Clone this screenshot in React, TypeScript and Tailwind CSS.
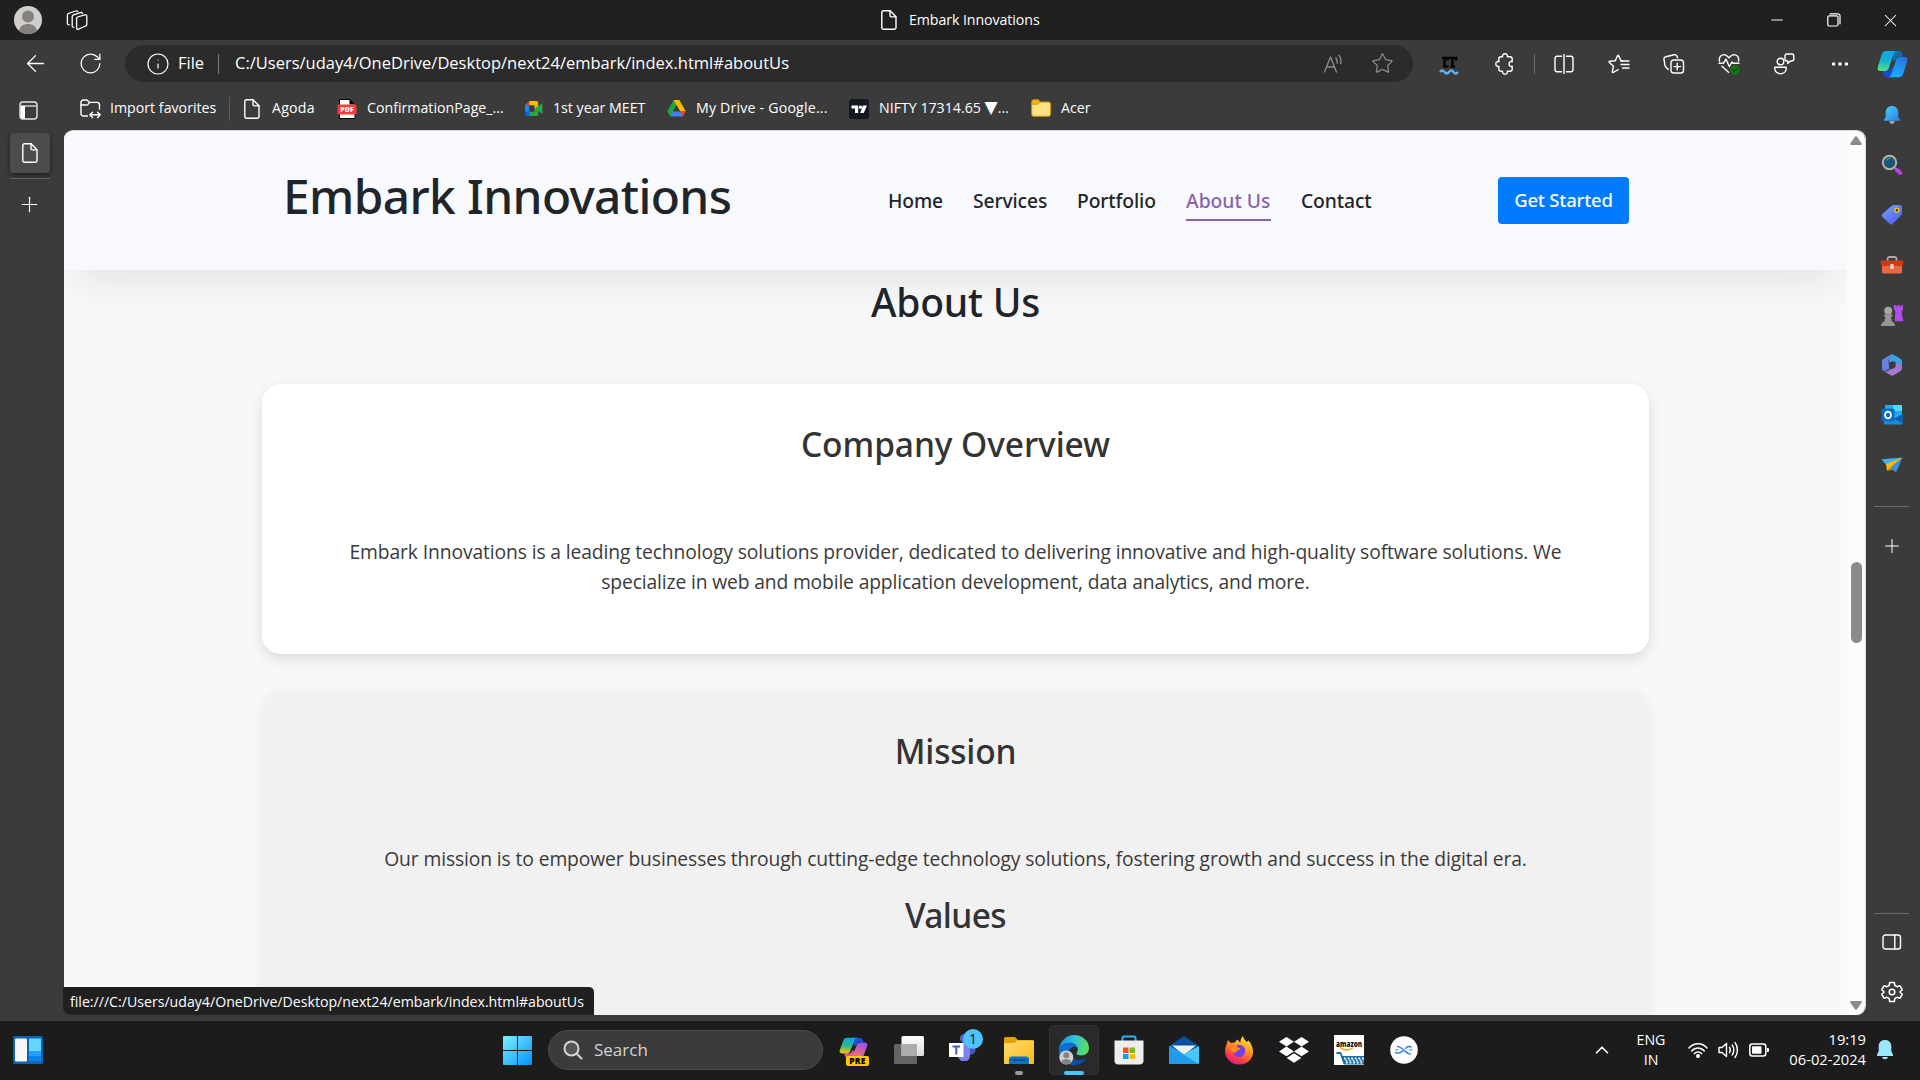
import type { ReactNode } from "react";
import { ArrowLeft, ChevronUp, Info, Minus, MoreHorizontal, Plus, RotateCw, Star, X } from "lucide-react";

type IconProps = { className?: string };

/* ---------- line icons ---------- */

const line = {
  fill: "none",
  stroke: "currentColor",
  strokeLinecap: "round" as const,
  strokeLinejoin: "round" as const,
};

function FileIcon({ className = "" }: IconProps) {
  return (
    <svg viewBox="0 0 16 20" className={`h-5 w-4 shrink-0 ${className}`} {...line} strokeWidth={1.4}>
      <path d="M2.5.8h6.6l5.9 6v10.6a1.8 1.8 0 0 1-1.8 1.8H2.5A1.7 1.7 0 0 1 .8 17.4V2.5A1.7 1.7 0 0 1 2.5.8Z" />
      <path d="M9 .9v4.6c0 .9.5 1.4 1.4 1.4h4.5" />
    </svg>
  );
}

function WorkspacesIcon() {
  return (
    <svg viewBox="0 0 22 20" className="h-5 w-[22px]" {...line} strokeWidth={1.3}>
      <path d="M11.5 7 18.8 4.9c1.2-.3 2 .2 2 1.3v8.300c0 .8-.4 1.300-1.200 1.500l-7 3.200c-1.300.4-2-.1-2-1.200V8.700c0-.9.200-1.400.9-1.700Z" />
      <path d="M7.800 17.200c-1 .1-1.600-.4-1.600-1.400V6.700c0-.9.300-1.500 1.200-1.800l7-2.300c.9-.3 1.600 0 2 .8" />
      <path d="M3.300 14.800c-1 .1-1.900-.4-1.900-1.500V5.100c0-.9.400-1.500 1.300-1.800l7-2.300c.9-.3 1.700 0 2 .6" />
    </svg>
  );
}

function TabsPaneIcon() {
  return (
    <svg viewBox="0 0 19 19" className="size-[19px]">
      <rect x="1" y="1" width="17" height="17" rx="3" fill="none" stroke="#e6e6e6" strokeWidth="1.4" />
      <path d="M1.500 5h16" stroke="#e6e6e6" strokeWidth="1.300" />
      <path d="M1.500 5h4.500v12.500H3.500a2 2 0 0 1-2-2Z" fill="#fff" />
    </svg>
  );
}

function ImportIcon() {
  return (
    <svg viewBox="0 0 21 20" className="h-5 w-[21px]" {...line} strokeWidth={1.4}>
      <path d="M7.500 17H3.300A2.300 2.300 0 0 1 1 14.700V3.300A2.300 2.300 0 0 1 3.300 1h2.900c.6 0 1 .2 1.400.6L9.500 3.400H17a2.500 2.500 0 0 1 2.500 2.500V10" />
      <path d="M1 6h5.600c.6 0 1-.2 1.400-.6l1.600-1.800" />
      <path d="M10 15.800h10M12.500 13.200 9.900 15.800l2.600 2.600M17.600 13.200l2.600 2.600-2.600 2.600" />
    </svg>
  );
}

function PuzzleIcon() {
  return (
    <svg viewBox="0 0 20 22" className="h-[22px] w-5" {...line} strokeWidth={1.4}>
      <path d="M6 3.700h1.700c-.5-1.700.6-3 2.300-3s2.800 1.300 2.300 3H15c1.300 0 2.200.9 2.200 2.200v2.800c-1.700-.5-3.200.5-3.200 2.300s1.500 2.800 3.200 2.300v2.800c0 1.300-.9 2.200-2.200 2.200h-2.700c.5 1.700-.6 3-2.300 3s-2.800-1.300-2.300-3H6c-1.300 0-2.200-.9-2.200-2.200v-2.800C2.100 13.800.8 12.700.8 11s1.300-2.800 3-2.300V5.900c0-1.300.9-2.200 2.200-2.200Z" />
    </svg>
  );
}

function ReadAloudIcon() {
  return (
    <svg viewBox="0 0 22 20" className="h-5 w-[22px] text-[#8d8d8d]" {...line} strokeWidth={1.3}>
      <path d="M1.500 18 7.500 3l6 15M3.600 13h7.800M12.800 3.800c1.300 1.500 1.700 3.300 1.400 5.200M15.800 1.200c2 2.500 2.600 5.400 2 8.500" />
    </svg>
  );
}

function LanguageToolIcon() {
  return (
    <svg viewBox="0 0 20 20" className="mt-1 size-5" fill="none">
      <path d="M5.500 1v9.500h4M3 2h4M8.500 4.500V2H17v2.500M13.500 2v8.500M11.500 10.500H16" stroke="#030303" strokeWidth="2.500" />
      <path d="M1 16c1.500-2 3-2 4.500 0s3 2 4.500 0 3-2 4.500 0 3 2 4.500 0" stroke="#5ab4f5" strokeWidth="2.300" />
    </svg>
  );
}

function SplitIcon() {
  return (
    <svg viewBox="0 0 20 20" className="size-5" {...line} strokeWidth={1.4}>
      <path d="M10 .5v19M7.500 2.200H3.200A2.200 2.200 0 0 0 1 4.400v11.200a2.200 2.200 0 0 0 2.200 2.200h4.300M12.500 2.200h4.300A2.200 2.200 0 0 1 19 4.400v11.200a2.200 2.200 0 0 1-2.200 2.200h-4.300" />
    </svg>
  );
}

function FavoritesIcon() {
  return (
    <svg viewBox="0 0 22 20" className="h-5 w-[22px]" {...line} strokeWidth={1.4}>
      <path d="M14.500 7 13 6.800 10.600 1.500c-.2-.5-.8-.5-1 0L7.300 6.700l-5.600.6c-.6.100-.8.700-.4 1.100l4.200 3.800-1.200 5.600c-.1.600.4 1 .9.700l5-2.900" />
      <path d="M13 10.500h8M13 7h8M14.500 14h6.500" />
    </svg>
  );
}

function CollectionsIcon() {
  return (
    <svg viewBox="0 0 22 20" className="h-5 w-[22px]" {...line} strokeWidth={1.400}>
      <rect x="8" y="6" width="12.500" height="13" rx="2.800" />
      <path d="M14.200 9.300v6.600M11 12.600h6.500M5.300 15.600 2.800 13c-.5-.5-.8-1.100-.9-1.800L1 5.300C.8 4 1.500 2.900 2.800 2.700l8.300-2c1.300-.3 2.400.4 2.900 1.500l.5 1.500" />
    </svg>
  );
}

function HealthIcon() {
  return (
    <svg viewBox="0 0 22 22" className="size-[22px]" {...line} strokeWidth={1.400}>
      <path d="M1.500 8.200C.7 4.700 2.500 1.700 5.700 1.600c2.200 0 3.800 1.300 5.300 3.300 1.500-2 3.100-3.300 5.300-3.300 3.200.1 5 3.100 4.200 6.600" />
      <path d="M1 10.200h4.500L8 6.200l3.300 7.300 2.700-4.600 1 1.300h6M4 13.300l6.500 6" />
      <circle cx="16.800" cy="17" r="4.700" fill="#0f7b0f" stroke="none" />
      <path d="m14.800 17 1.400 1.400 2.700-2.800" stroke="#0a3f0a" strokeWidth="1.100" />
    </svg>
  );
}

function ShareChatIcon() {
  return (
    <svg viewBox="0 0 22 22" className="size-[22px]" {...line} strokeWidth={1.400}>
      <circle cx="7.500" cy="8.500" r="3.300" />
      <path d="M1.800 14.200h11.400v1.300c0 3.200-2.500 5.200-5.700 5.200s-5.700-2-5.700-5.200ZM12 3a2 2 0 0 1 2-2h4.800a2 2 0 0 1 2 2v3a2 2 0 0 1-2 2h-1.300l-2.700 2.500V8H14a2 2 0 0 1-2-2Z" />
    </svg>
  );
}

function SidePaneIcon() {
  return (
    <svg viewBox="0 0 20 16" className="h-4 w-5" {...line} strokeWidth={1.400}>
      <rect x="1" y="1" width="17.500" height="14" rx="2.500" />
      <path d="M12.800 1v14" />
    </svg>
  );
}

function GearIcon() {
  return (
    <svg viewBox="0 0 22 22" className="size-[22px]" {...line} strokeWidth={1.500}>
      <circle cx="11" cy="11" r="2.800" />
      <path d="M8.700 1.500h4.600l.6 3 2.100 1.200 2.900-1 2.300 4L19 10.700v.6l2.200 2-2.300 4-2.900-1-2.100 1.200-.6 3H8.700l-.6-3L6 16.300l-2.900 1-2.300-4 2.200-2v-.6l-2.200-2 2.300-4 2.900 1 2.100-1.200Z" />
    </svg>
  );
}

/* ---------- coloured icons ---------- */

function CopilotIcon({ id, warm = false, className = "" }: IconProps & { id: string; warm?: boolean }) {
  return (
    <svg viewBox="0 0 32 32" preserveAspectRatio="none" className={className}>
      <defs>
        <linearGradient id={`${id}a`} x1=".3" y1="0" x2=".2" y2="1">
          <stop offset="0" stopColor="#0ea5e9" />
          <stop offset=".5" stopColor={warm ? "#2bb98a" : "#12b5c9"} />
          <stop offset="1" stopColor={warm ? "#ffc800" : "#5fe08a"} />
        </linearGradient>
        <linearGradient id={`${id}b`} x1=".8" y1="0" x2=".2" y2="1">
          <stop offset="0" stopColor={warm ? "#9b4df0" : "#2a6fe0"} />
          <stop offset="1" stopColor={warm ? "#ff7a5c" : "#15b8ff"} />
        </linearGradient>
      </defs>
      <path d="M15 1h7.500c2.200 0 3.300 1.800 3.800 4l.8 2.800h-5.600L17 14Z" fill={warm ? "#1c4fd8" : "#0a6fa8"} />
      <path d="M17 31H10c-2 0-3.100-1.600-3.600-3.600L5.500 24H12l4-6Z" fill={warm ? "#ef4fa0" : "#1b49d6"} />
      <path d="M8.800 1h12c-2 .2-3 1.500-3.700 3.700l-4.800 16c-.6 2.300-2 3.300-4.200 3.300H4c-3 0-4-2.200-3-5.500L5 4.500C5.700 2.200 6.800 1 8.800 1Z" fill={`url(#${id}a)`} />
      <path d="M23.200 31h-12c2-.2 3-1.500 3.700-3.700l4.800-16C20.300 9 21.700 8 23.900 8H28c3 0 4 2.200 3 5.500l-4 14c-.7 2.300-1.800 3.500-3.800 3.500Z" fill={`url(#${id}b)`} />
    </svg>
  );
}

function PdfIcon() {
  return (
    <svg viewBox="0 0 20 20" className="size-5">
      <path d="M2.500 .5h10.500l5 5v14h-15.500Z" fill="#fff" stroke="#000" strokeWidth="1" />
      <path d="M12.500 0 18 5.500h-5.500Z" fill="#000" />
      <rect x=".5" y="5.500" width="19" height="10" rx="1" fill="#fb3b3b" />
      <text x="10" y="13.200" textAnchor="middle" fontSize="7" fontWeight="800" fill="#fff" fontFamily="Open Sans, sans-serif">PDF</text>
    </svg>
  );
}

function MeetIcon() {
  return (
    <svg viewBox="0 0 20 18" className="h-[17px] w-[19px]">
      <path d="M5.500 1H13a2 2 0 0 1 2 2v4l-4 2V5.500H5.500Z" fill="#fbbc04" />
      <path d="M5.500 1v4.500H1Z" fill="#ea4335" />
      <path d="M1 5.500h4.500v7H1Z" fill="#2684fc" />
      <path d="M1 12.500h4.500V17H2.500A1.500 1.500 0 0 1 1 15.500Z" fill="#0066da" />
      <path d="M5.500 12.500H11V9l4-2 3.500-3c.5-.4 1-.1 1 .5v9c0 .6-.5.900-1 .5L15 11.500V15a2 2 0 0 1-2 2H5.500Z" fill="#25a844" />
    </svg>
  );
}

function DriveIcon() {
  return (
    <svg viewBox="0 0 20 18" className="h-[17px] w-[19px]">
      <path d="M7 0h6L3.300 17.500.3 12Z" fill="#1ea446" />
      <path d="M7 0h6l6.700 12h-6Z" fill="#ffba00" />
      <path d="M6.500 12h13.200l-3 5.500H3.300Z" fill="#3f83f5" />
      <path d="M13.700 12h6l-3 5.500Z" fill="#ea4335" />
      <path d="m10 5.500 3.700 6.500H6.500Z" fill="#3b3b3b" />
    </svg>
  );
}

function TradingViewIcon() {
  return (
    <svg viewBox="0 0 20 20" className="size-5">
      <rect width="20" height="20" rx="3.500" fill="#131722" />
      <path d="M2.500 6.500h6.700v7.500H6V9.500H2.500ZM14 6.500h4L14.700 14h-3.500Z" fill="#fff" />
      <circle cx="11.500" cy="8.200" r="1.700" fill="#fff" />
    </svg>
  );
}

function BookmarkFolderIcon() {
  return (
    <svg viewBox="0 0 20 18" className="h-[18px] w-5">
      <path d="M.7 3A2 2 0 0 1 2.700.8h4.500L9.500 3H17.500a2 2 0 0 1 2 2v10.300a2 2 0 0 1-2 2h-15a1.800 1.800 0 0 1-1.800-2Z" fill="#ffe083" stroke="#c99700" strokeWidth="1" />
      <path d="M.9 3a2 2 0 0 1 2-2h4.300l2 2-2.200 2.200H.9Z" fill="#f2b90c" stroke="#b98900" strokeWidth=".7" />
    </svg>
  );
}

function Bell({ className = "" }: IconProps) {
  return (
    <svg viewBox="0 0 20 22" className={className}>
      <defs>
        <linearGradient id="bell" x1="0" y1="0" x2="1" y2="1">
          <stop offset="0" stopColor="#46d0f5" />
          <stop offset="1" stopColor="#2a7de8" />
        </linearGradient>
      </defs>
      <path d="M7 18h6c-.3 1.800-1.400 2.700-3 2.700S7.300 19.800 7 18Z" fill="#b9b9b9" />
      <path d="M10 1c4.300 0 7 3 7 7v5.500l2 2.700c.3.600 0 1.300-.7 1.300H1.700c-.7 0-1-.7-.7-1.300l2-2.700V8c0-4 2.700-7 7-7Z" fill="url(#bell)" />
    </svg>
  );
}

function MagnifierIcon() {
  return (
    <svg viewBox="0 0 22 22" className="size-[22px]">
      <path d="m14 14 2.500 2" stroke="#999" strokeWidth="2" />
      <path d="m16 16 3.200 3" stroke="#c63df0" strokeWidth="4" strokeLinecap="round" />
      <circle cx="8.500" cy="8.500" r="6.700" fill="#1d5674" stroke="#b3b0ad" strokeWidth="2" />
      <path d="M5.500 6.500a4 4 0 0 1 4-2" stroke="#4a90b0" strokeWidth="1.200" fill="none" />
    </svg>
  );
}

function TagIcon() {
  return (
    <svg viewBox="0 0 22 22" className="size-[22px]">
      <defs>
        <linearGradient id="tag" x1="0" y1="0" x2=".8" y2="1">
          <stop offset="0" stopColor="#72a7fb" />
          <stop offset="1" stopColor="#4f5cf0" />
        </linearGradient>
      </defs>
      <path d="M13 1h5.500A2.500 2.500 0 0 1 21 3.500V9c0 1-.3 1.700-1 2.400L11.500 20c-.8.800-1.800.8-2.600 0L1.300 12.800c-.8-.8-.8-1.900 0-2.700L10.500 2c.8-.7 1.500-1 2.500-1Z" fill="url(#tag)" />
      <circle cx="15.800" cy="6.200" r="2" fill="#3b3320" stroke="#f3c613" strokeWidth="1.500" />
    </svg>
  );
}

function ToolboxIcon() {
  return (
    <svg viewBox="0 0 24 20" className="h-5 w-6">
      <path d="M7.500 6V4A2 2 0 0 1 9.500 2h5a2 2 0 0 1 2 2v2" fill="none" stroke="#a9a9a9" strokeWidth="1.800" />
      <path d="M2 10h20v7a1.500 1.500 0 0 1-1.500 1.500h-17A1.500 1.500 0 0 1 2 17Z" fill="#e8683f" />
      <rect x=".8" y="5.500" width="22.400" height="5.500" rx="1" fill="#cc3b12" />
      <rect x="10.300" y="9" width="3.500" height="5" rx="1.200" fill="#d6d6d6" />
    </svg>
  );
}

function ChessIcon() {
  return (
    <svg viewBox="0 0 24 24" className="size-6">
      <path d="M13.800 2h2v1.600h1.600V2h2.200v1.600h1.600V2H23v4.500l-1.300 1.800.8 7.200.8 1v1.700h-8.500l.5-9.700L13.800 6.500Z" fill="#b44bf0" />
      <circle cx="8.200" cy="7.800" r="4" fill="#a5a5a5" />
      <path d="M4 11.500h8.500v2H11l.7 4.700c2 .8 3.300 2.200 3.300 4.800H1c0-2.600 1.300-4 3.500-4.800l.8-4.700H4Z" fill="#979797" />
    </svg>
  );
}

function M365Icon() {
  return (
    <svg viewBox="0 0 22 22" className="size-[22px]">
      <path d="M9.500.8 3 4.500C1.700 5.300 1 6.300 1 8v6.500c0 1.500.8 2.500 2.300 2.500 1.500 0 5-2.200 5-2.200L7.500 7Z" fill="#6f7fe0" />
      <path d="M9.500.8c1-.5 2-.5 3 0L19 4.500c1.300.8 2 1.800 2 3.500v4L14.300 8C12 6.500 8.300 8 8.300 10.500v-5c0-2 .2-3.500 1.200-4.700Z" fill="#38a4e8" />
      <path d="M21 12v2c0 1.600-.7 2.700-2 3.400l-6.500 3.800c-1 .6-2 .6-3 0L3 17.300c2.500.4 4-.6 5.300-1.400L14.300 12.500V8l5 2.800c1 .5 1.700.7 1.700 1.200Z" fill="#a679d3" />
      <path d="M11.300 7.300 14.500 9v4l-3.300 2L8 13V9Z" fill="#3b3b3b" />
    </svg>
  );
}

function OutlookIcon() {
  return (
    <svg viewBox="0 0 22 22" className="size-[22px]">
      <path d="M4 2a1 1 0 0 1 1-1h15a1 1 0 0 1 1 1v12H4Z" fill="#28a8ea" />
      <path d="M12 1h8a1 1 0 0 1 1 1v5h-9Z" fill="#50d9ff" />
      <path d="M3 12l9 4 9.500-6v9.500a1 1 0 0 1-1 1H4a1 1 0 0 1-1-1Z" fill="#1490df" />
      <path d="M21.500 10v9.500L13 14.800Z" fill="#0f5fae" />
      <rect x=".5" y="4.500" width="13" height="13" rx="1.500" fill="#0a6cc8" />
      <ellipse cx="7" cy="11" rx="3" ry="3.400" fill="none" stroke="#fff" strokeWidth="1.800" />
    </svg>
  );
}

function PlaneIcon() {
  return (
    <svg viewBox="0 0 22 18" className="h-[18px] w-[22px]">
      <path d="M.5 3.200 21.500 1.500 5.500 9.500Z" fill="#3cb2f2" />
      <path d="M21.500 1.500 15 16.500 9 11.500Z" fill="#3f8be8" />
      <path d="M21.500 1.500 5 8l1 7 3.500-3.500Z" fill="#f5b70f" />
      <path d="m9.500 11.500 2.300 2L6 15Z" fill="#d98b06" />
    </svg>
  );
}

function WidgetsIcon() {
  return (
    <svg viewBox="0 0 30 28" className="h-7 w-[30px]">
      <rect width="30" height="28" rx="1.500" fill="#0b63b5" />
      <rect x="2" y="2.500" width="12" height="23" rx="1" fill="#f7f7f7" />
      <rect x="16" y="2.500" width="12" height="12.500" rx=".5" fill="#66d6ff" />
      <rect x="16" y="15" width="12" height="5" fill="#1fa2f7" />
      <rect x="16" y="20" width="12" height="5.500" fill="#0a84ea" />
    </svg>
  );
}

function StartIcon() {
  return (
    <svg viewBox="0 0 29 29" className="size-[29px]">
      <defs>
        <linearGradient id="start" gradientUnits="userSpaceOnUse" x1="0" y1="0" x2="29" y2="29">
          <stop offset="0" stopColor="#7df2ff" />
          <stop offset="1" stopColor="#0490fb" />
        </linearGradient>
      </defs>
      <path d="M1 0h13v14H0V1Q0 0 1 0ZM15 0h13q1 0 1 1v13H15ZM0 15h14v14H1q-1 0-1-1ZM15 15h14v13q0 1-1 1H15Z" fill="url(#start)" />
    </svg>
  );
}

function TaskViewIcon() {
  return (
    <svg viewBox="0 0 30 28" className="h-7 w-[30px]">
      <defs>
        <linearGradient id="tv" x1="0" y1="0" x2="0" y2="1">
          <stop offset="0" stopColor="#fff" />
          <stop offset="1" stopColor="#dcdcdc" />
        </linearGradient>
      </defs>
      <rect x="0" y="8" width="23" height="20" rx="1.500" fill="#646464" />
      <rect x="7.500" y="0" width="22.500" height="20" rx="1.500" fill="url(#tv)" />
      <path d="M7.500 8H23v12H7.500Z" fill="#acacac" />
    </svg>
  );
}

function TeamsIcon() {
  return (
    <svg viewBox="0 0 34 32" className="ml-[5px] h-8 w-[34px]">
      <path d="M19 12h7.500v10a5 5 0 0 1-7.500 3Z" fill="#4b53bc" />
      <circle cx="15.500" cy="9.500" r="4.500" fill="#5b63d0" />
      <path d="M9 14h12v12a6 6 0 0 1-12 1Z" fill="#7b83eb" />
      <rect x="0" y="14" width="14.500" height="14" fill="#fff" />
      <path d="M3.500 17.500h7.500M7.250 17.500v8" stroke="#4b53bc" strokeWidth="2" />
      <circle cx="24" cy="10" r="10" fill="#4cc2ff" />
      <text x="24" y="15" textAnchor="middle" fontSize="14" fill="#111" fontFamily="Open Sans, sans-serif">1</text>
    </svg>
  );
}

function ExplorerIcon() {
  return (
    <svg viewBox="0 0 30 28" className="h-7 w-[30px]">
      <defs>
        <linearGradient id="exp" x1="0" y1="0" x2="1" y2="1">
          <stop offset="0" stopColor="#ffdc6b" />
          <stop offset="1" stopColor="#f9bb1c" />
        </linearGradient>
      </defs>
      <path d="M0 2.500A1.500 1.500 0 0 1 1.500 1H11l3 3h14.500A1.500 1.500 0 0 1 30 5.500V10H0Z" fill="#e3a008" />
      <path d="M0 7h10.500L13 4.500h17v22.500a1 1 0 0 1-1 1H1a1 1 0 0 1-1-1Z" fill="url(#exp)" />
      <path d="M5 28v-4.500A3 3 0 0 1 8 20.500h14a3 3 0 0 1 3 3V28Z" fill="#0b72c4" />
      <path d="M8.500 24h13" stroke="#07498a" strokeWidth="1.500" />
    </svg>
  );
}

function EdgeIcon() {
  return (
    <svg viewBox="0 0 30 30" className="size-[30px]">
      <defs>
        <linearGradient id="edgeTop" x1="0" y1=".4" x2="1" y2=".6">
          <stop offset="0" stopColor="#1b8fe0" />
          <stop offset=".45" stopColor="#2fc3d6" />
          <stop offset="1" stopColor="#63e04f" />
        </linearGradient>
      </defs>
      <path d="M15 0c8.500 0 15 6 15 13 0 4.500-3.300 7.500-7.500 7.500-3.500 0-5-1.200-5-2.200s1.300-1.500 1.300-4C18.800 11.300 16 9 12 9 6 9 1 12.500.2 13.500 1 6 7.500 0 15 0Z" fill="url(#edgeTop)" />
      <path d="M0 15C.5 11 5 7.500 11 7.500c4.500 0 7.500 2.800 7.700 6.200C17.500 12 16 11.500 14 12c-3.500 1-5 4-4.500 7.500.8 5 5 9 9.500 9.500-10 3.500-19.500-4-19-14Z" fill="#0f6fd1" />
      <path d="M12 13c-2 3-1.500 7 2 9.800 4 3 9.500 2.700 13.500 0-2 4.200-7 7.200-12 7.200-5-1-8-5-7.500-10 .3-3 1.500-5.500 4-7Z" fill="#0c4c9c" />
      <circle cx="7.300" cy="22.500" r="7" fill="#d0cfcd" />
      <circle cx="7.300" cy="20.300" r="3" fill="#85827e" />
      <path d="M2.300 27.300c.7-2.300 2.500-3.300 5-3.300s4.300 1 5 3.300a7 7 0 0 1-10 0Z" fill="#85827e" />
    </svg>
  );
}

function StoreIcon() {
  return (
    <svg viewBox="0 0 30 30" className="size-[30px]">
      <path d="M8.500 7V3A1.500 1.500 0 0 1 10 1.500h10A1.500 1.500 0 0 1 21.500 3v4" fill="none" stroke="#2cb4ef" strokeWidth="2" />
      <path d="M.5 5.500h29v20a4 4 0 0 1-4 4h-21a4 4 0 0 1-4-4Z" fill="#ededed" />
      <path d="M9 12.500h5.500V18H9Z" fill="#f25022" />
      <path d="M15.500 12.500H21V18h-5.500Z" fill="#7fba00" />
      <path d="M9 19h5.500v5H9Z" fill="#00a4ef" />
      <path d="M15.500 19H21v5h-5.500Z" fill="#ffb900" />
    </svg>
  );
}

function MailIcon() {
  return (
    <svg viewBox="0 0 30 28" className="h-7 w-[30px]">
      <path d="M0 10 15 0l15 10-5 6H5Z" fill="#0c4f9e" />
      <path d="M3 9.500h24L15 19Z" fill="#f1f1f1" />
      <path d="M0 10l15 8 15-8v17a1 1 0 0 1-1 1H1a1 1 0 0 1-1-1Z" fill="#45c8f7" />
      <path d="M0 10l30 18H1a1 1 0 0 1-1-1Z" fill="#1e9be9" />
    </svg>
  );
}

function FirefoxIcon() {
  return (
    <svg viewBox="0 0 30 30" className="size-[30px]">
      <defs>
        <linearGradient id="fx" x1=".8" y1="0" x2=".3" y2="1">
          <stop offset="0" stopColor="#fff04a" />
          <stop offset=".4" stopColor="#ff9a1f" />
          <stop offset=".75" stopColor="#ff4343" />
          <stop offset="1" stopColor="#e31587" />
        </linearGradient>
      </defs>
      <path d="M19 1c.5 3 2.500 4.500 3.500 6l2-1.500c3 3.500 5 8 4.500 12.500C28.300 25 22.500 29.500 15 29.500 7 29.500 1 23.500 1 16c0-4 1.500-6.500 2-7.500l.8-3.500 3 3c1.200-.5 2.700-.7 4-.5C12 5.500 12.500 5 14 4.500c.5 2 1.500 2.500 2.500 3C16 5 17.500 2.500 19 1Z" fill="url(#fx)" />
      <circle cx="15" cy="16" r="6.200" fill="#7440e8" />
      <path d="M6 9c3-1 6 0 7 1.500-1 2 1 2.200 3.500 2.500-.5 2-3 2-3.700 3.300C12 18 9 18 8 16c-1.500-1-2.500-4-2-7Z" fill="#ff8a1f" />
    </svg>
  );
}

function DropboxIcon() {
  return (
    <svg viewBox="0 0 30 26" className="h-[26px] w-[30px]" fill="#fff">
      <path d="m7.500 0 7.500 4.800-7.500 4.800L0 4.800ZM22.500 0 30 4.800l-7.500 4.800L15 4.800ZM7.500 9.600l7.500 4.800-7.500 4.800L0 14.400ZM22.500 9.600l7.500 4.800-7.500 4.800-7.500-4.800ZM15 16.300l7.300 4.700-7.300 4.700L7.700 21Z" />
    </svg>
  );
}

function AmazonIcon() {
  return (
    <svg viewBox="0 0 30 30" className="size-[30px]">
      <rect width="30" height="30" fill="#fff" />
      <text x="15" y="11.500" textAnchor="middle" fontSize="8" fontWeight="800" textLength="26" lengthAdjust="spacingAndGlyphs" fill="#111" fontFamily="Open Sans, sans-serif">amazon</text>
      <path d="M6 12.500c4 3 9 3 13 .3" stroke="#f90" strokeWidth="1.300" fill="none" />
      <path d="M2.500 18h4l4 11" stroke="#1a6fa6" strokeWidth="1.800" fill="none" />
      <path d="M8 21h22v8.500H10.500Z" fill="#1a6fa6" />
      <path d="M10 23.500h20M12 27.500h18" stroke="#fff" strokeWidth="1.800" strokeDasharray="1.800 1.800" />
      <path d="M11.500 25.500h18.500" stroke="#fff" strokeWidth="1.400" strokeDasharray="1.400 2.200" />
    </svg>
  );
}

function WaveAppIcon() {
  return (
    <svg viewBox="0 0 28 28" className="size-7">
      <circle cx="14" cy="14" r="13.800" fill="#fff" />
      <path d="M7.500 10.500c2.500 0 4 1.500 6.500 3.800s4 3.700 6.500 3.700M5.500 16.500c3 1.200 5.300.3 7-1.300M15.500 12.500c1.800-1.800 3.800-2.800 5.500-1.500" stroke="#4285f4" strokeWidth="1.600" fill="none" strokeLinecap="round" />
      <path d="M19.500 13.800h2.500M6 13.800h2" stroke="#7aa8f8" strokeWidth="1.500" strokeLinecap="round" />
    </svg>
  );
}

function WifiIcon() {
  return (
    <svg viewBox="0 0 20 16" className="h-4 w-5" {...line} strokeWidth={1.500}>
      <path d="M1 6c5-5.600 13-5.600 18 0M3.700 8.900c3.600-4 9-4 12.600 0M6.400 11.600c2.100-2.300 5.100-2.300 7.200 0" />
      <circle cx="10" cy="14" r="1.300" fill="currentColor" />
    </svg>
  );
}

function SoundIcon() {
  return (
    <svg viewBox="0 0 21 18" className="h-[18px] w-[21px]" {...line} strokeWidth={1.400}>
      <path d="M1 6.500h3l4.500-4v13l-4.500-4H1ZM11.500 6.300c1 1.600 1 3.800 0 5.400M14.200 4c2 3 2 7 0 10M17 1.500c3.200 4.400 3.200 10.600 0 15" />
    </svg>
  );
}

function BatteryIcon() {
  return (
    <svg viewBox="0 0 20 14" className="h-3.5 w-5">
      <rect x=".8" y="1" width="16" height="12" rx="2.500" fill="none" stroke="#fff" strokeWidth="1.500" />
      <rect x="3" y="3.200" width="9.500" height="7.600" rx=".8" fill="#fff" />
      <path d="M18 5h1a1 1 0 0 1 1 1v2a1 1 0 0 1-1 1h-1Z" fill="#fff" />
    </svg>
  );
}

/* ---------- browser chrome ---------- */

function Cell({ className, children }: { className: string; children: ReactNode }) {
  return <div className={`flex shrink-0 items-center justify-center ${className}`}>{children}</div>;
}

function TitleBar() {
  return (
    <header className="flex h-10 items-center bg-[#202020]">
      <div className="flex w-[881px] items-center gap-6 pl-[14px]">
        <svg viewBox="0 0 28 28" className="size-7">
          <circle cx="14" cy="14" r="14" fill="#d0cfcd" />
          <circle cx="14" cy="10.500" r="6" fill="#85827e" />
          <path d="M5 24.700c1-4.600 4.500-6.700 9-6.700s8 2.100 9 6.700A14 14 0 0 1 5 24.700Z" fill="#85827e" />
        </svg>
        <WorkspacesIcon />
      </div>
      <FileIcon />
      <span className="ml-3 text-[14.2px] tracking-[-0.08px]">Embark Innovations</span>
      <div className="ml-auto flex pr-px">
        <Cell className="w-[57px]"><Minus size={18} strokeWidth={1.3} /></Cell>
        <Cell className="w-[57px]">
          <svg viewBox="0 0 14 14" className="size-3.5" {...line} strokeWidth={1.200}>
            <rect x=".8" y="2.800" width="10.200" height="10.200" rx="1.500" />
            <path d="M3 .8h8a2 2 0 0 1 2 2v8" />
          </svg>
        </Cell>
        <Cell className="w-[57px]"><X size={21} strokeWidth={1.2} /></Cell>
      </div>
    </header>
  );
}

function AddressRow() {
  return (
    <div className="flex h-[47px] items-center">
      <Cell className="w-[70px]"><ArrowLeft size={27} strokeWidth={1.2} /></Cell>
      <Cell className="w-[40px]"><RotateCw size={25} strokeWidth={1.2} /></Cell>
      <div className="ml-[15px] flex h-[37px] w-[1288px] items-center rounded-full bg-[#2b2b2b] pl-[21px] text-[16.5px]">
        <Info size={24} strokeWidth={1.2} />
        <span className="ml-2 w-[40px]">File</span>
        <span className="h-5 w-px bg-[#7a7a7a]" />
        <span className="ml-[16px]">C:/Users/uday4/OneDrive/Desktop/next24/embark/index.html#aboutUs</span>
        <div className="ml-auto flex pr-[6px]">
          <Cell className="w-[49px]"><ReadAloudIcon /></Cell>
          <Cell className="w-[49px]"><Star size={23} strokeWidth={1.3} className="text-[#8d8d8d]" /></Cell>
        </div>
      </div>
      <Cell className="ml-2 w-14"><LanguageToolIcon /></Cell>
      <Cell className="w-14"><PuzzleIcon /></Cell>
      <span className="ml-px h-5 w-px bg-[#6a6a6a]" />
      <Cell className="ml-px w-[55px]"><SplitIcon /></Cell>
      <Cell className="w-[55px]"><FavoritesIcon /></Cell>
      <Cell className="w-[55px]"><CollectionsIcon /></Cell>
      <Cell className="w-[55px]"><HealthIcon /></Cell>
      <Cell className="w-[55px]"><ShareChatIcon /></Cell>
      <Cell className="ml-px w-[55px]"><MoreHorizontal size={22} strokeWidth={2} /></Cell>
      <Cell className="w-[51px]"><CopilotIcon id="cpTop" className="h-[28px] w-[31px]" /></Cell>
    </div>
  );
}

function Bookmark({ icon, label, className }: { icon: ReactNode; label: ReactNode; className: string }) {
  return (
    <div className={`flex shrink-0 items-center whitespace-nowrap ${className}`}>
      <span className="mr-[10px] flex w-5 shrink-0 justify-center">{icon}</span>
      <span className="-mt-[2px]">{label}</span>
    </div>
  );
}

function BookmarksRow() {
  return (
    <div className="flex h-[43px] items-center text-[14.2px]">
      <Cell className="mt-1 w-[57px]"><TabsPaneIcon /></Cell>
      <div className="ml-[23px] flex w-[149px] items-center gap-[9px]">
        <ImportIcon />
        <span className="-mt-[2px]">Import favorites</span>
      </div>
      <span className="h-6 w-px bg-[#5c5c5c]" />
      <Bookmark className="ml-[12px] w-[95px] tracking-[0.2px]" icon={<FileIcon />} label="Agoda" />
      <Bookmark className="w-[186px]" icon={<PdfIcon />} label="ConfirmationPage_..." />
      <Bookmark className="w-[143px]" icon={<MeetIcon />} label="1st year MEET" />
      <Bookmark className="w-[183px] tracking-[0.18px]" icon={<DriveIcon />} label="My Drive - Google..." />
      <Bookmark
        className="w-[182px]"
        icon={<TradingViewIcon />}
        label={<>NIFTY 17314.65 <span className="font-['DejaVu_Sans'] text-[17px] leading-none">▼</span>...</>}
      />
      <Bookmark className="w-[80px]" icon={<BookmarkFolderIcon />} label="Acer" />
    </div>
  );
}

function VerticalTabs() {
  return (
    <aside className="flex w-16 flex-col pt-[3px] pl-[10px]">
      <div className="flex h-10 w-10 items-center justify-center rounded bg-[#4c4c4c] shadow-[0_2px_5px_rgba(0,0,0,0.5)]">
        <FileIcon />
      </div>
      <span className="mt-[5px] h-px w-10 bg-[#5f5f5f]" />
      <Cell className="mt-[13px] w-[38px]"><Plus size={25} strokeWidth={1.1} /></Cell>
    </aside>
  );
}

function SideBar() {
  return (
    <aside className="flex w-[53px] flex-col items-center pr-[2px]">
      <div className="-mt-10 flex flex-col items-center">
        <Cell className="h-[50px]"><Bell className="h-5 w-[18px]" /></Cell>
        <Cell className="h-[50px]"><MagnifierIcon /></Cell>
        <Cell className="h-[50px]"><TagIcon /></Cell>
        <Cell className="h-[50px]"><ToolboxIcon /></Cell>
        <Cell className="h-[50px]"><ChessIcon /></Cell>
        <Cell className="h-[50px]"><M365Icon /></Cell>
        <Cell className="h-[50px]"><OutlookIcon /></Cell>
        <Cell className="h-[50px]"><PlaneIcon /></Cell>
      </div>
      <span className="mt-[16px] h-px w-[35px] bg-[#6a6a6a]" />
      <Cell className="mt-[28px]"><Plus size={22} strokeWidth={1.1} /></Cell>
      <span className="mt-auto h-px w-[35px] bg-[#6a6a6a]" />
      <Cell className="h-[55px]"><SidePaneIcon /></Cell>
      <Cell className="mb-[5px] h-[46px]"><GearIcon /></Cell>
    </aside>
  );
}

/* ---------- web page ---------- */

function Navbar() {
  return (
    <nav className="relative z-10 flex h-[139px] shrink-0 items-center bg-[#f8f9fc] pl-[219px] font-['Noto_Sans',sans-serif] font-medium text-[#212529] shadow-[0_22px_40px_-14px_rgba(20,40,50,0.11)]">
      <span className="-mt-[10px] w-[605px] text-[47.8px] leading-[60px] tracking-[-0.62px] whitespace-nowrap">Embark Innovations</span>
      <ul className="mt-px flex h-10 gap-[30px] text-[19.3px] leading-[39px] tracking-[-0.12px] whitespace-nowrap">
        <li className="w-[55px]">Home</li>
        <li className="w-[74px]">Services</li>
        <li className="w-[79px]">Portfolio</li>
        <li className="w-[85px] border-b-2 border-[#8763ad] tracking-[0px] text-[#8763ad]">About Us</li>
        <li className="w-[70px]">Contact</li>
      </ul>
      <button className="-mt-px ml-[127px] h-[47px] w-[131px] rounded bg-[#007bff] text-center text-[18.5px] leading-[46px] tracking-[-0.2px] whitespace-nowrap text-[#f8f9fa]">
        Get Started
      </button>
    </nav>
  );
}

function WebPage() {
  return (
    <div className="flex min-w-0 flex-1 flex-col overflow-hidden bg-[#f8f8f8]">
      <Navbar />
      <section className="flex flex-col items-center text-center text-[19.3px] leading-[30px] tracking-[-0.12px] text-[#3a3a3a]">
        <h2 className="mt-2 font-['Noto_Sans',sans-serif] text-[39px] leading-[48px] font-medium tracking-[-0.2px] text-[#212529]">About Us</h2>
        <div className="mt-[58px] h-[270px] w-[1387px] rounded-[19px] bg-white px-[60px] pt-[39px] shadow-[0_5px_14px_rgba(0,0,0,0.12)]">
          <h3 className="font-['Noto_Sans',sans-serif] text-[33.5px] leading-[42px] font-medium tracking-[-0.08px] text-[#333]">Company Overview</h3>
          <p className="mt-[72px] whitespace-nowrap">
            Embark Innovations is a leading technology solutions provider, dedicated to delivering innovative and high-quality software solutions. We
            <br />
            <span className="tracking-[-0.15px]">specialize in web and mobile application development, data analytics, and more.</span>
          </p>
        </div>
        <div className="mt-[37px] h-[500px] w-[1387px] rounded-[19px] bg-[#f1f1f1] pt-[40px] shadow-[0_4px_12px_rgba(0,0,0,0.07)]">
          <h3 className="-mt-px font-['Noto_Sans',sans-serif] text-[33.5px] leading-[42px] font-medium tracking-[-0.2px] text-[#333]">Mission</h3>
          <p className="mt-[72px] whitespace-nowrap">
            Our mission is to empower businesses through cutting-edge technology solutions, fostering growth and success in the digital era.
          </p>
          <h3 className="mt-[20px] font-['Noto_Sans',sans-serif] text-[33.5px] leading-[42px] font-medium tracking-[-0.6px] text-[#333]">Values</h3>
        </div>
      </section>
    </div>
  );
}

function Scrollbar() {
  return (
    <div className="flex w-[18px] shrink-0 flex-col items-center bg-[#fcfcfc] pt-[5px] pb-[5px]">
      <svg viewBox="0 0 12 9" className="h-[9px] w-3 shrink-0" fill="#8b8b8b">
        <path d="M5 .8q1-1.200 2 0l4.700 6.700q.5 1.500-.8 1.500H1.100Q-.2 9 .3 7.500Z" />
      </svg>
      <span className="mt-[417px] h-[81px] w-[11px] shrink-0 rounded-full bg-[#8b8b8b]" />
      <svg viewBox="0 0 12 9" className="mt-auto h-[9px] w-3 shrink-0" fill="#8b8b8b">
        <path d="M5 8.200q1 1.200 2 0l4.700-6.700Q12.200 0 10.900 0H1.100Q-.2 0 .3 1.500Z" />
      </svg>
    </div>
  );
}

/* ---------- taskbar ---------- */

function Taskbar() {
  return (
    <footer className="flex h-[60px] items-center border-t border-[#424242] bg-[#1c1c1c] pb-px">
      <div className="w-[503px] pl-[13px]"><WidgetsIcon /></div>
      <StartIcon />
      <div className="ml-4 flex h-10 w-[275px] items-center rounded-full border border-[#4a4a4a] bg-[#3b3b3b] pl-[14px] text-[17px] text-[#d4d4d4]">
        <svg viewBox="0 0 20 20" className="size-5" {...line} strokeWidth={2}>
          <circle cx="8.500" cy="8.500" r="7" fill="#555" />
          <path d="m13.800 13.800 4.700 4.700" />
        </svg>
        <span className="ml-[11px] -mt-px">Search</span>
      </div>
      <div className="ml-[3px] flex items-center">
        <Cell className="relative h-[50px] w-[55px]">
          <CopilotIcon id="cpTask" warm className="mb-1 h-[22px] w-[29px]" />
          <span className="absolute bottom-[9px] left-[20px] flex h-[10px] w-[23px] items-center justify-center rounded-[2px] bg-[#ffc800] text-[8.500px] leading-none font-extrabold tracking-[0.3px] text-black">PRE</span>
        </Cell>
        <Cell className="w-[55px]"><TaskViewIcon /></Cell>
        <Cell className="w-[55px] pb-[10px]"><TeamsIcon /></Cell>
        <Cell className="relative h-[50px] w-[55px]">
          <ExplorerIcon />
          <span className="absolute bottom-0 h-1 w-2 rounded-full bg-[#9a9a9a]" />
        </Cell>
        <Cell className="w-[55px]">
          <div className="relative flex size-[50px] items-center justify-center rounded-[5px] border border-[#343434] bg-[#2a2a2a]">
            <EdgeIcon />
            <span className="absolute -bottom-px h-1 w-5 rounded-full bg-[#4cc2ff]" />
          </div>
        </Cell>
        <Cell className="w-[55px]"><StoreIcon /></Cell>
        <Cell className="w-[55px]"><MailIcon /></Cell>
        <Cell className="w-[55px]"><FirefoxIcon /></Cell>
        <Cell className="w-[55px]"><DropboxIcon /></Cell>
        <Cell className="w-[55px]"><AmazonIcon /></Cell>
        <Cell className="w-[55px]"><WaveAppIcon /></Cell>
      </div>
      <div className="ml-auto flex items-center">
        <ChevronUp size={22} strokeWidth={1.8} />
        <div className="ml-[23px] w-[30px] text-center text-[14.2px] leading-5">ENG<br />IN</div>
        <div className="ml-[22px] flex items-center gap-[10px]">
          <WifiIcon />
          <SoundIcon />
          <BatteryIcon />
        </div>
        <div className="-mt-[2px] ml-[10px] w-[87px] text-right text-[14.7px] leading-5">19:19<br />06-02-2024</div>
        <svg viewBox="0 0 16 20" className="mr-[27px] ml-[11px] h-5 w-4" fill="#99e7ff">
          <path d="M8 0c4 0 6.300 2.700 6.300 6v5L16 14.700V16H0v-1.300L1.700 11V6C1.700 2.700 4 0 8 0ZM5 17h6c-.5 1.500-1.500 2.200-3 2.200S5.500 18.500 5 17Z" />
        </svg>
      </div>
    </footer>
  );
}

export default function App() {
  return (
    <div className="flex h-[1080px] w-[1920px] flex-col overflow-hidden bg-[#3b3b3b] font-['Open_Sans',sans-serif] text-white">
      <TitleBar />
      <AddressRow />
      <BookmarksRow />
      <div className="flex h-[890px]">
        <VerticalTabs />
        <main className="relative mb-[5px] flex w-[1803px] min-w-0 -mr-px">
          <div className="flex w-[1802px] overflow-hidden rounded-[9px] border-t border-r border-[#d9dadc]">
            <WebPage />
            <Scrollbar />
          </div>
          <div className="absolute bottom-0 -left-px flex h-7 w-[531px] items-center rounded-tr-[5px] rounded-bl-[8px] bg-[#202020] pt-px pl-[7px] text-[14.15px] whitespace-nowrap">
            file:///C:/Users/uday4/OneDrive/Desktop/next24/embark/index.html#aboutUs
          </div>
        </main>
        <SideBar />
      </div>
      <Taskbar />
    </div>
  );
}
